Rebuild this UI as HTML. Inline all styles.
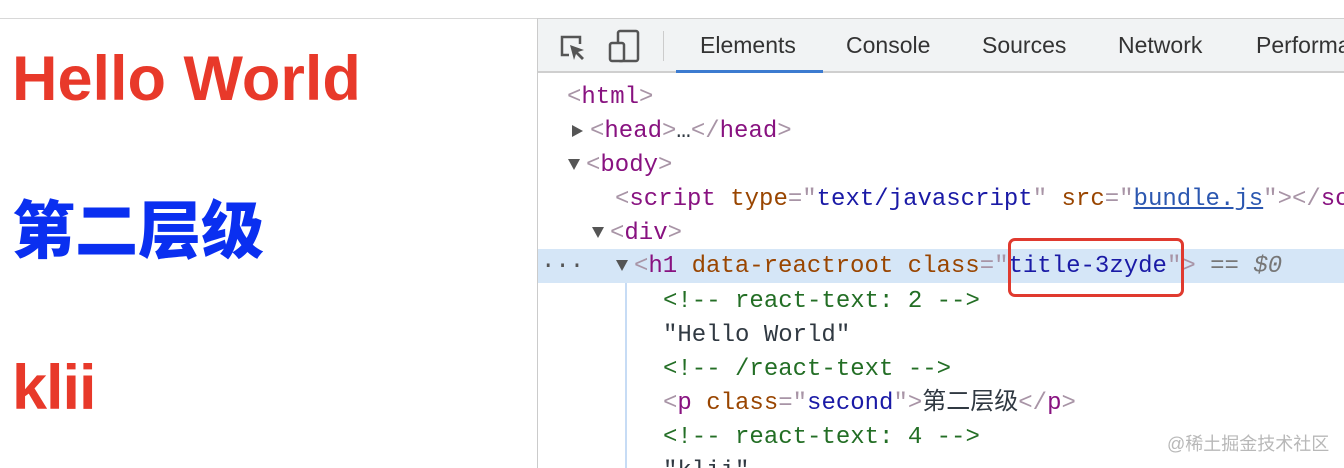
<!DOCTYPE html>
<html style="width:1344px;height:468px;overflow:hidden"><head><meta charset="utf-8"><style>
*{margin:0;padding:0;box-sizing:border-box}
body{width:1344px;height:468px;overflow:hidden;background:#fff;position:relative;font-family:"Liberation Sans",sans-serif}
.h{position:absolute;left:12px;font-weight:bold;font-size:63px;line-height:1;white-space:nowrap}
#dev{position:absolute;left:537px;top:18px;width:807px;height:450px;border-left:1px solid #cbcbcb;border-top:1px solid #d0d0d0;overflow:hidden}
#tb{position:absolute;left:0;top:0;width:807px;height:54px;background:#f1f3f4;border-bottom:2px solid #cfcfcf}
.tab{position:absolute;top:13px;font-size:23px;color:#333;white-space:nowrap}
.row{position:absolute;height:34px;line-height:34px;font-family:"Liberation Mono","Noto Sans CJK SC",monospace;font-size:24px;white-space:pre;color:#303942}
.t{color:#881280}.b{color:#a894a6}.a{color:#994500}.v{color:#1a1aa6}.c{color:#236e25}
.tri{display:inline-block;width:0;height:0;border-left:6px solid transparent;border-right:6px solid transparent;border-top:11px solid #555;vertical-align:middle;margin-right:6px}
.tr{display:inline-block;width:0;height:0;border-top:6px solid transparent;border-bottom:6px solid transparent;border-left:11px solid #555;vertical-align:middle;margin-right:7px}
#clip{position:absolute;left:0;top:0;width:1344px;height:468px;overflow:hidden}
</style></head><body><div id="clip">
<div style="position:absolute;left:0;top:18px;width:537px;height:1px;background:#d8d8d8"></div>
<div class="h" style="top:48px;color:#e8392a">Hello World</div>
<div class="h" style="top:201px;color:#0a2ff0;font-family:'Liberation Sans','Noto Sans CJK SC',sans-serif;font-size:63px;font-weight:900">第二层级</div>
<div class="h" style="top:357px;color:#e8392a;letter-spacing:-1px">klii</div>

<div id="dev">
<div id="tb">
<svg style="position:absolute;left:20px;top:14px" width="30" height="30" viewBox="0 0 30 30"><path d="M11 22H4V4h18v7" fill="none" stroke="#555" stroke-width="2.5"/><path d="M12 12l14 5-6 2 6 6-2 2-6-6-2 6z" fill="#555"/></svg>
<svg style="position:absolute;left:70px;top:10px" width="34" height="36" viewBox="0 0 34 36"><rect x="10" y="2" width="20" height="30" rx="2" fill="none" stroke="#555" stroke-width="2.5"/><rect x="2" y="14" width="14" height="18" rx="2" fill="#f1f3f4" stroke="#555" stroke-width="2.5"/></svg>
<div style="position:absolute;left:125px;top:12px;width:1px;height:30px;background:#ccc"></div>
<div class="tab" style="left:162px">Elements</div>
<div style="position:absolute;left:138px;top:51px;width:147px;height:3px;background:#3c7bd0"></div>
<div class="tab" style="left:308px">Console</div>
<div class="tab" style="left:444px">Sources</div>
<div class="tab" style="left:580px">Network</div>
<div class="tab" style="left:718px">Performance</div>
</div>
</div>
<div style="position:absolute;left:538px;top:249px;width:806px;height:34px;background:#d5e6f7"></div>
<div style="position:absolute;left:625px;top:283px;width:2px;height:185px;background:#c7dcf5"></div>
<div class="row" style="top:81px;left:567px"><span class="b">&lt;</span><span class="t">html</span><span class="b">&gt;</span></div>
<div class="row" style="top:115px;left:572px"><span class="tr"></span><span class="b">&lt;</span><span class="t">head</span><span class="b">&gt;</span>…<span class="b">&lt;/</span><span class="t">head</span><span class="b">&gt;</span></div>
<div class="row" style="top:149px;left:568px"><span class="tri"></span><span class="b">&lt;</span><span class="t">body</span><span class="b">&gt;</span></div>
<div class="row" style="top:183px;left:615px"><span class="b">&lt;</span><span class="t">script</span> <span class="a">type</span><span class="b">="</span><span class="v">text/javascript</span><span class="b">"</span> <span class="a">src</span><span class="b">="</span><span style="color:#2b57b0;text-decoration:underline">bundle.js</span><span class="b">"&gt;&lt;/</span><span class="t">script</span><span class="b">&gt;</span></div>
<div class="row" style="top:217px;left:592px"><span class="tri"></span><span class="b">&lt;</span><span class="t">div</span><span class="b">&gt;</span></div>
<div class="row" style="top:250px;left:541px;color:#555">···</div>
<div class="row" style="top:250px;left:616px"><span class="tri"></span><span class="b">&lt;</span><span class="t">h1</span> <span class="a">data-reactroot</span> <span class="a">class</span><span class="b">="</span><span class="v">title-3zyde</span><span class="b">"&gt;</span> <span style="color:#777">==</span> <i style="color:#777">$0</i></div>
<div style="position:absolute;left:1008px;top:238px;width:176px;height:59px;border:3px solid #e03a2f;border-radius:7px"></div>
<div class="row c" style="top:285px;left:663px">&lt;!-- react-text: 2 --&gt;</div>
<div class="row" style="top:319px;left:663px">"Hello World"</div>
<div class="row c" style="top:353px;left:663px">&lt;!-- /react-text --&gt;</div>
<div class="row" style="top:387px;left:663px"><span class="b">&lt;</span><span class="t">p</span> <span class="a">class</span><span class="b">="</span><span class="v">second</span><span class="b">"&gt;</span>第二层级<span class="b">&lt;/</span><span class="t">p</span><span class="b">&gt;</span></div>
<div class="row c" style="top:421px;left:663px">&lt;!-- react-text: 4 --&gt;</div>
<div class="row" style="top:455px;left:663px">"klii"</div>
<div style="position:absolute;left:1167px;top:430px;font-size:18px;color:#b8b8b8;font-family:'Liberation Sans','Noto Sans CJK SC',sans-serif;white-space:nowrap">@稀土掘金技术社区</div>
</div></body></html>
